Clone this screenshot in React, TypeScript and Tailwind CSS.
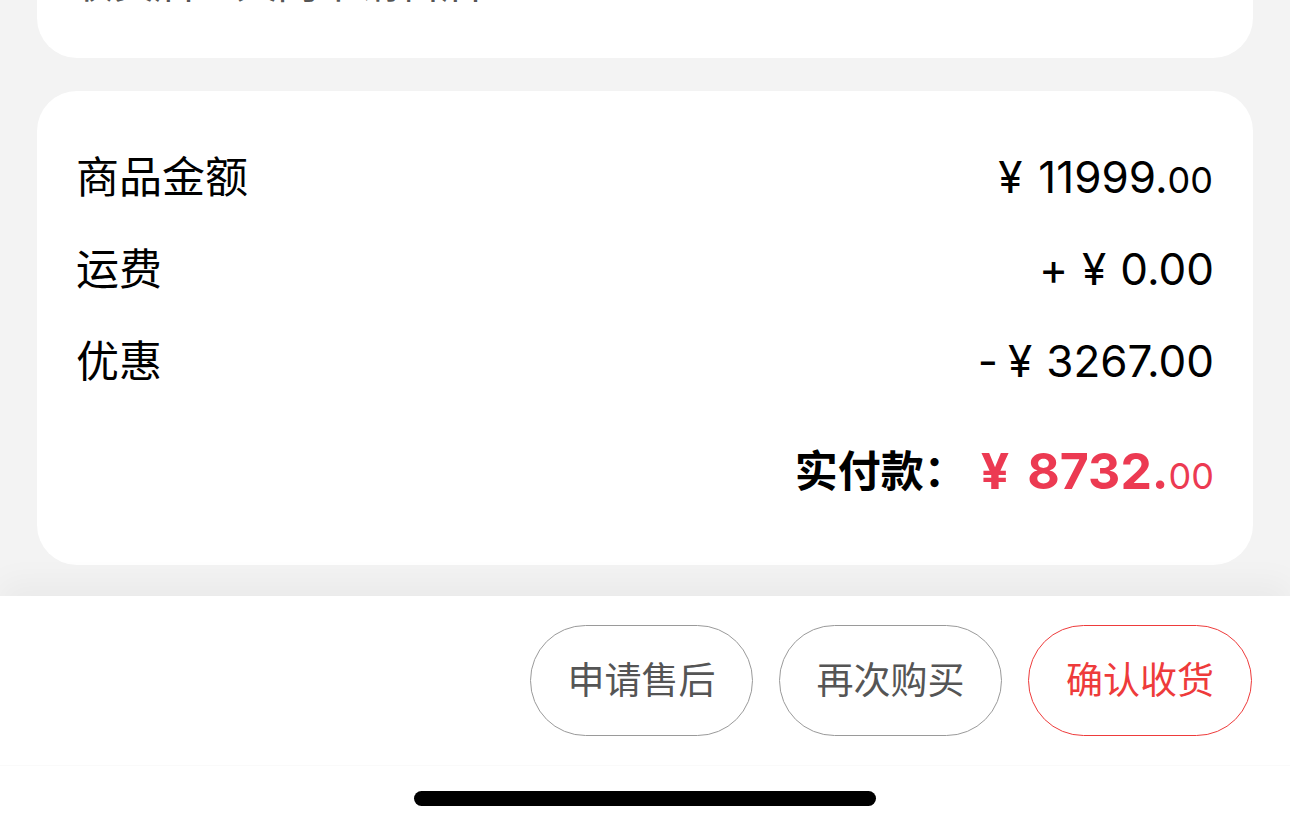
export default function App() {
  const cjk = { fontFamily: 'Inter, "Noto Sans CJK SC", sans-serif' };
  return (
    <div
      className="w-[1290px] h-[830px] bg-[#f3f3f3] flex flex-col overflow-hidden"
      style={cjk}
    >
      {/* top card (scrolled, only bottom visible) */}
      <div className="mx-[37px] h-[58px] bg-white rounded-b-[40px] overflow-hidden shrink-0 relative">
        <div className="absolute left-[35px] top-[-38px] text-[41px] leading-[42px] text-[#555] whitespace-nowrap">
          收货后七天内申请售后
        </div>
      </div>

      {/* amounts card */}
      <div className="mx-[37px] mt-[33px] h-[474px] bg-white rounded-[40px] px-[39px] pt-[40px] shrink-0 flex flex-col">
        <div className="h-[92px] flex items-center justify-between">
          <span className="text-[43px] text-black">商品金额</span>
          <span className="text-[44px] text-black flex items-baseline pr-[1px]">
            <span className="mr-[16px]">¥</span>11999.
            <span className="text-[36px]">00</span>
          </span>
        </div>
        <div className="h-[92px] flex items-center justify-between">
          <span className="text-[43px] text-black">运费</span>
          <span className="text-[44px] text-black flex items-baseline">
            <span className="mr-[14px]">+</span>
            <span className="mr-[14px]">¥</span>0.00
          </span>
        </div>
        <div className="h-[92px] flex items-center justify-between">
          <span className="text-[43px] text-black">优惠</span>
          <span className="text-[44px] text-black flex items-baseline">
            <span className="mr-[10px]">-</span>
            <span className="mr-[14px]">¥</span>3267.00
          </span>
        </div>
        <div className="h-[128px] flex items-center justify-end">
          <span className="text-[43px] font-bold text-black mr-[14px]">实付款：</span>
          <span className="text-[50px] font-bold text-[#ec3a52] flex items-baseline">
            <span className="mr-[18px]">¥</span>8732.
            <span className="text-[36px] font-normal">00</span>
          </span>
        </div>
      </div>

      {/* bottom bar */}
      <div className="mt-[31px] flex-1 bg-white shadow-[0_-14px_30px_rgba(0,0,0,0.04)] flex flex-col">
        <div className="h-[170px] border-b border-[#fafafa] flex items-center justify-end pr-[38px] gap-[26px]">
          <div className="w-[223px] h-[111px] rounded-full border border-[#9a9a9a] flex items-center justify-center text-[37px] text-[#555]">
            申请售后
          </div>
          <div className="w-[223px] h-[111px] rounded-full border border-[#9a9a9a] flex items-center justify-center text-[37px] text-[#555]">
            再次购买
          </div>
          <div className="w-[224px] h-[111px] rounded-full border border-[#ee3b3b] flex items-center justify-center text-[37px] text-[#ee3b3b]">
            确认收货
          </div>
        </div>
        <div className="flex-1 flex justify-center pt-[25px]">
          <div className="w-[462px] h-[15px] rounded-full bg-black" />
        </div>
      </div>
    </div>
  );
}
